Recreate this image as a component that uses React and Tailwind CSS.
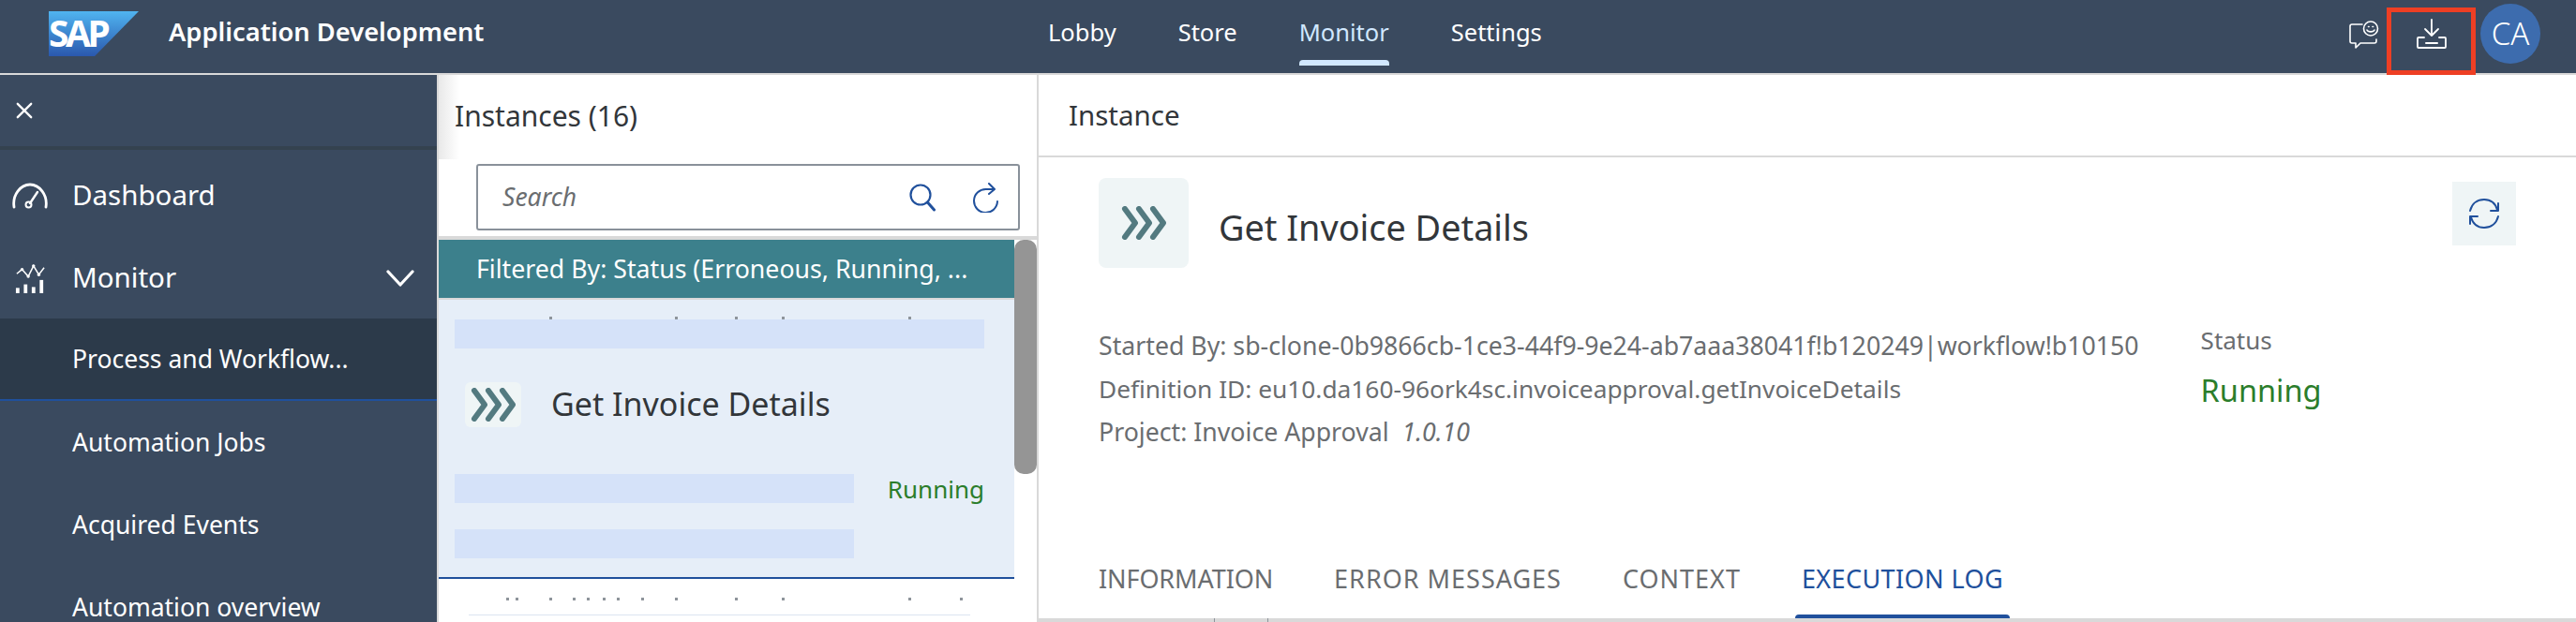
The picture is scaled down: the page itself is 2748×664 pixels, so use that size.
import React from "react";

const topSpecks = [118, 252, 316, 366, 501];
const bottomSpecks = [72, 82, 118, 143, 158, 175, 190, 216, 252, 316, 366, 501, 556];

const Chevrons = ({ className }) => (
  <svg viewBox="0 0 48 36" className={className} fill="none" stroke="#537a80" strokeWidth="6" strokeLinecap="round" strokeLinejoin="round">
    <path d="M4 3l11 15L4 33" />
    <path d="M19 3l11 15-11 15" />
    <path d="M34 3l11 15-11 15" />
  </svg>
);

const SapLogo = () => (
  <div className="relative w-[96px] h-[48px]">
    <svg viewBox="0 0 96 48" className="w-[96px] h-[48px]">
      <defs>
        <linearGradient id="sapBlue" x1="0" y1="0" x2="0" y2="1">
          <stop offset="0" stopColor="#50b4f0" />
          <stop offset="1" stopColor="#2a58ae" />
        </linearGradient>
      </defs>
      <polygon points="0,0 96,0 49,48 0,48" fill="url(#sapBlue)" />
    </svg>
    <span className="absolute left-[0px] top-[4px] text-[39px] leading-[38px] font-bold tracking-[-3.5px] text-white">SAP</span>
  </div>
);

const NavItem = ({ label, active }) => (
  <div className={`relative h-[78px] flex items-center text-[25.5px] ${active ? "text-[#d1e8ff]" : "text-white"}`}>
    <span className="-mt-[10px]">{label}</span>
    {active && <div className="absolute left-0 right-0 top-[64px] h-[6px] bg-[#d1e8ff] rounded-t-[4px]" />}
  </div>
);

const Header = () => (
  <header className="h-[80px] shrink-0 flex bg-[#3a4a5f] border-b-2 border-[#d9d9d9]">
    <div className="w-[1118px] shrink-0 flex items-start pl-[52px] pt-[12px]">
      <SapLogo />
      <span className="ml-[32px] mt-[5px] text-[27.3px] leading-[34px] font-semibold text-white whitespace-nowrap">Application Development</span>
    </div>
    <nav className="flex gap-[66px]">
      <NavItem label="Lobby" />
      <NavItem label="Store" />
      <NavItem label="Monitor" active />
      <NavItem label="Settings" />
    </nav>
    <div className="ml-auto flex items-start pr-[38px]">
      <svg viewBox="0 0 32 30" className="mt-[22px] w-[32px] h-[30px]" fill="none" stroke="#fff" strokeWidth="1.6" strokeLinecap="round" strokeLinejoin="round">
        <path d="M14 4H3a2 2 0 0 0-2 2v16a2 2 0 0 0 2 2h4v5l5-5h15a2 2 0 0 0 2-2v-2" />
        <circle cx="23" cy="8.5" r="7.5" />
        <path d="M19 10c1 2.5 7 2.5 8 0" />
        <path d="M20.5 6.5h.6M25 6.5h.6" />
      </svg>
      <div className="ml-[8px] mt-[8px] w-[95px] h-[72px] border-[5px] border-[#ee3f24] flex justify-center">
        <svg viewBox="0 0 32 32" className="mt-[7px] w-[32px] h-[32px]" fill="none" stroke="#fff" strokeWidth="1.8" strokeLinecap="round" strokeLinejoin="round">
          <path d="M16 1v17M9 11l7 7 7-7" />
          <path d="M8 20H2a1 1 0 0 0-1 1v9a1 1 0 0 0 1 1h28a1 1 0 0 0 1-1v-9a1 1 0 0 0-1-1h-6" />
          <path d="M10 26h12" strokeWidth="2" />
        </svg>
      </div>
      <div className="ml-[5px] mt-[4px] w-[64px] h-[64px] rounded-full bg-[#3d6cae] flex items-center justify-center text-[33px] font-light text-white">CA</div>
    </div>
  </header>
);

const SideRow = ({ icon, label, right }) => (
  <div className="h-[88px] shrink-0 flex items-center text-[29.5px] text-white">
    <div className="w-[77px] shrink-0 flex pl-[13px]">{icon}</div>
    <span className="-mt-[1px]">{label}</span>
    {right}
  </div>
);

const SubRow = ({ label, active }) => (
  <div className={`h-[88px] shrink-0 flex items-center pl-[77px] pt-[2px] text-[26.5px] text-white whitespace-nowrap ${active ? "bg-[#2c3a4a] border-b-2 border-[#20509c] -mt-[1px]" : ""}`}>
    {label}
  </div>
);

const Sidebar = () => (
  <aside className="w-[466px] shrink-0 bg-[#3a4a5f] flex flex-col overflow-hidden">
    <div className="h-[80px] shrink-0 flex items-center pl-[17px] border-b-[4px] border-[#34424f]">
      <svg viewBox="0 0 20 20" className="w-[18px] h-[18px]" fill="none" stroke="#fff" strokeWidth="2.6" strokeLinecap="round">
        <path d="M2 2l16 16M18 2L2 18" />
      </svg>
    </div>
    <div className="h-[5px] shrink-0" />
    <SideRow
      label="Dashboard"
      icon={
        <svg viewBox="0 0 38 28" className="w-[38px] h-[28px]" fill="none" stroke="#fff" strokeWidth="2.8" strokeLinecap="round">
          <path d="M2 26C0 13 9 2 19 2s19 11 17 24" />
          <path d="M19 22l8-12" strokeWidth="2.4" />
          <circle cx="17.5" cy="23.5" r="3" strokeWidth="2" />
        </svg>
      }
    />
    <SideRow
      label="Monitor"
      icon={
        <svg viewBox="0 0 34 34" className="ml-[3px] w-[32px] h-[32px]" fill="#fff" stroke="none">
          <path d="M2 12l6-5 7 8 6-12 6 10 6-8" fill="none" stroke="#fff" strokeWidth="1.6" />
          <circle cx="8" cy="7" r="1.8" />
          <circle cx="15" cy="15" r="1.8" />
          <circle cx="21" cy="3" r="1.8" />
          <circle cx="27" cy="13" r="1.8" />
          <rect x="1" y="28" width="4" height="6" />
          <rect x="10" y="24" width="4" height="10" />
          <rect x="19" y="27" width="4" height="7" />
          <rect x="28" y="19" width="4" height="15" />
        </svg>
      }
      right={
        <svg viewBox="0 0 30 20" className="ml-auto mr-[24px] w-[30px] h-[20px]" fill="none" stroke="#fff" strokeWidth="3.2" strokeLinecap="round" strokeLinejoin="round">
          <path d="M2 3l13 14L28 3" />
        </svg>
      }
    />
    <SubRow label="Process and Workflow..." active />
    <SubRow label="Automation Jobs" />
    <SubRow label="Acquired Events" />
    <SubRow label="Automation overview" />
  </aside>
);

const Bar = ({ className }) => <div className={`bg-[#d5e2f9] h-[31px] ${className}`} />;

const Specks = ({ xs, className }) => (
  <div className={`absolute left-0 h-[3px] w-full ${className}`}>
    {xs.map((x) => (
      <span key={x} className="absolute top-0 w-[3px] h-[3px] bg-[#8e949b]" style={{ left: x }} />
    ))}
  </div>
);

const ListPanel = () => (
  <section className="relative w-[642px] shrink-0 bg-white border-x-2 border-[#d9d9d9] flex flex-col overflow-hidden">
    <div className="absolute left-0 top-0 w-[22px] h-[90px] bg-gradient-to-r from-[#e9e9e9] to-white" />
    <div className="relative h-[95px] shrink-0 flex items-center pl-[17px] pb-[8px] text-[30px] text-[#32363a]">Instances (16)</div>
    <div className="ml-[40px] mr-[18px] h-[71px] shrink-0 border-2 border-[#89919a] rounded-[3px] flex items-center pl-[26px]">
      <span className="text-[26.5px] italic text-[#6a6d70]">Search</span>
      <svg viewBox="0 0 28 30" className="ml-auto w-[28px] h-[30px]" fill="none" stroke="#20509c" strokeWidth="2.2" strokeLinecap="round">
        <circle cx="12" cy="12" r="10.5" />
        <path d="M19.5 20l7 8" strokeWidth="3" />
      </svg>
      <svg viewBox="0 0 28 32" className="ml-[40px] mr-[20px] w-[28px] h-[32px]" fill="none" stroke="#20509c" strokeWidth="2" strokeLinecap="round" strokeLinejoin="round">
        <path d="M26 20A12.5 12.5 0 1 1 14 7h8" />
        <path d="M17 1l6 6-6 5" />
      </svg>
    </div>
    <div className="mt-[6px] h-[4px] shrink-0 bg-[#d9d9d9]" />
    <div className="relative flex-1 min-h-0">
      <div className="absolute right-0 top-0 w-[24px] h-[250px] bg-[#959595] rounded-[10px]" />
      <div className="w-[614px] h-[62px] bg-[#3c808c] flex items-center pl-[40px] text-[26.7px] text-white whitespace-nowrap overflow-hidden">
        Filtered By: Status (Erroneous, Running, ...
      </div>
      <div className="h-[2px] w-[614px] bg-[#d9d9d9]" />
      <div className="relative w-[614px] h-[298px] bg-[#e6eef8] border-b-2 border-[#20509c] flex flex-col pl-[17px] pr-[32px]">
        <Specks xs={topSpecks} className="top-[18px]" />
        <Bar className="mt-[21px] shrink-0" />
        <div className="mt-[36px] flex items-center">
          <div className="ml-[11px] w-[60px] h-[48px] bg-[#eff5f6] rounded-[6px] flex items-center justify-center">
            <Chevrons className="w-[48px] h-[36px]" />
          </div>
          <span className="ml-[32px] -mt-[3px] text-[34px] leading-[46px] text-[#32363a] whitespace-nowrap">Get Invoice Details</span>
        </div>
        <div className="mt-[49px] flex items-center">
          <Bar className="w-[426px]" />
          <span className="ml-auto pt-[2px] text-[26px] leading-[31px] text-[#2b7d2b]">Running</span>
        </div>
        <Bar className="mt-[27px] w-[426px] shrink-0" />
      </div>
      <div className="relative w-[614px] h-[38px]">
        <Specks xs={bottomSpecks} className="top-[20px]" />
      </div>
      <div className="ml-[32px] w-[535px] h-px bg-[#dce4f0]" />
    </div>
  </section>
);

const DetailLine = ({ children, size }) => <div className={`leading-[34px] text-[#6a6d70] whitespace-nowrap ${size}`}>{children}</div>;

const Tab = ({ label, active, className }) => (
  <div className={`relative text-[27px] leading-[36px] whitespace-nowrap ${active ? "text-[#20509c]" : "text-[#6a6d70]"} ${className}`}>
    {label}
    {active && <div className="absolute -left-[7px] -right-[7px] top-[56px] h-[4px] bg-[#20509c] rounded-t-[4px]" />}
  </div>
);

const InstancePanel = () => (
  <section className="relative flex-1 min-w-0 bg-white flex flex-col overflow-hidden">
    <div className="h-[88px] shrink-0 flex items-center pl-[32px] text-[29.5px] text-[#32363a] border-b-2 border-[#d9d9d9]">Instance</div>
    <div className="flex-1 min-h-0 flex flex-col pl-[64px] pr-[64px]">
      <div className="mt-[22px] flex items-start">
        <div className="w-[96px] h-[96px] rounded-[8px] bg-[#eff5f6] flex items-center justify-center">
          <Chevrons className="w-[48px] h-[36px]" />
        </div>
        <span className="ml-[32px] mt-[29px] text-[37.8px] leading-[48px] text-[#32363a]">Get Invoice Details</span>
        <div className="ml-auto mt-[4px] w-[68px] h-[68px] bg-[#eff5f6] flex items-center justify-center">
          <svg viewBox="0 0 34 34" className="w-[34px] h-[34px]" fill="none" stroke="#20509c" strokeWidth="2" strokeLinecap="round" strokeLinejoin="round">
            <path d="M2 14C4 6 10 2 17 2c7 0 12 4 14 11" />
            <path d="M32 6v8h-8" />
            <path d="M32 20c-2 8-8 12-15 12-7 0-12-4-14-11" />
            <path d="M2 28v-8h8" />
          </svg>
        </div>
      </div>
      <div className="mt-[66px] flex items-start">
        <div className="flex flex-col gap-[12px]">
          <DetailLine size="text-[26.7px]">Started By: sb-clone-0b9866cb-1ce3-44f9-9e24-ab7aaa38041f!b120249|workflow!b10150</DetailLine>
          <DetailLine size="text-[26.3px]">Definition ID: eu10.da160-96ork4sc.invoiceapproval.getInvoiceDetails</DetailLine>
          <DetailLine size="text-[26.7px]">Project: Invoice Approval&nbsp;&nbsp;<i>1.0.10</i></DetailLine>
        </div>
        <div className="ml-[66px] -mt-[6px] flex flex-col">
          <span className="text-[26px] leading-[34px] text-[#6a6d70]">Status</span>
          <span className="mt-[14px] text-[32.5px] leading-[46px] text-[#2b7d2b]">Running</span>
        </div>
      </div>
      <div className="mt-[122px] flex gap-[65px]">
        <Tab label="INFORMATION" className="tracking-[-0.1px]" />
        <Tab label="ERROR MESSAGES" className="tracking-[1px]" />
        <Tab label="CONTEXT" className="tracking-[1px]" />
        <Tab label="EXECUTION LOG" className="tracking-[0.4px]" active />
      </div>
    </div>
    <div className="relative h-[4px] shrink-0 bg-[#d9d9d9]">
      <span className="absolute left-[187px] top-0 w-px h-[4px] bg-[#8e949b]" />
      <span className="absolute left-[244px] top-0 w-px h-[4px] bg-[#8e949b]" />
    </div>
  </section>
);

export default function App() {
  return (
    <div className="w-[2748px] h-[664px] flex flex-col overflow-hidden bg-white font-['Noto_Sans',sans-serif]">
      <Header />
      <div className="flex-1 min-h-0 flex">
        <Sidebar />
        <ListPanel />
        <InstancePanel />
      </div>
    </div>
  );
}
